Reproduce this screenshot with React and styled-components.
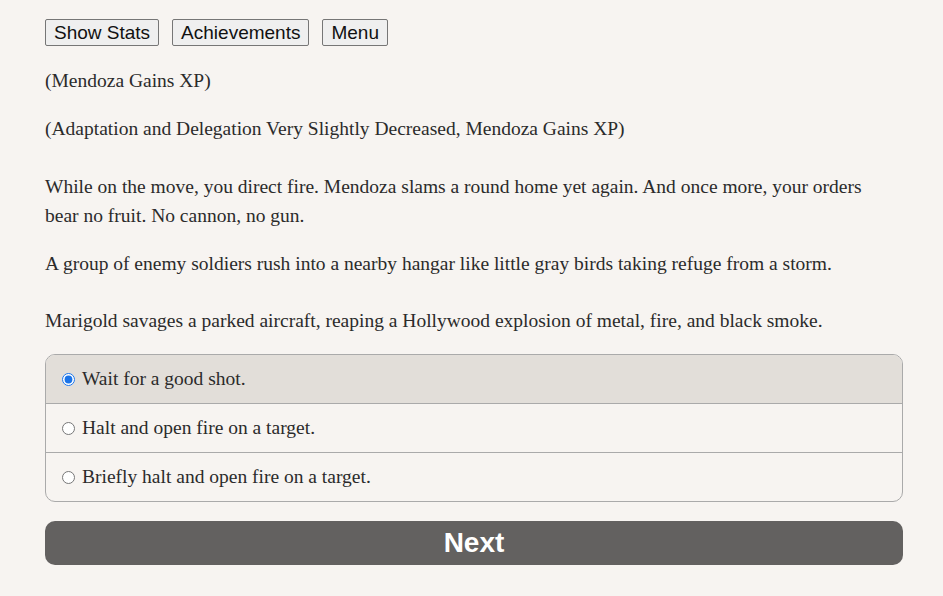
import React from 'react';
import styled, { createGlobalStyle } from 'styled-components';

const GlobalStyle = createGlobalStyle`
  html, body {
    margin: 0;
    padding: 0;
    background-color: #f7f4f1;
  }
`;

const Page = styled.div`
  width: 858px;
  padding: 19px 0 0 45px;
  font-family: "Liberation Serif", serif;
  font-size: 19.5px;
  color: #2b2b2b;
`;

const Toolbar = styled.div`
  display: flex;
  gap: 13px;
`;

const ToolButton = styled.button`
  font-family: "Liberation Sans", Arial, sans-serif;
  font-size: 19px;
  height: 27px;
  padding: 0 8px;
  color: #111;
  background: #efefef;
  border: 1px solid #767676;
  border-radius: 2px;
`;

const Para = styled.p`
  margin: ${p => p.$top || 0}px 0 0 0;
  padding-right: 30px;
  line-height: 29px;
`;

const Choices = styled.div`
  margin-top: 19px;
  border: 1px solid #aaa;
  border-radius: 10px;
  overflow: hidden;
`;

const Choice = styled.label`
  display: flex;
  align-items: center;
  height: 48px;
  padding-left: 16px;
  background: ${p => (p.$selected ? '#e2ded9' : 'transparent')};
  border-top: ${p => (p.$first ? 'none' : '1px solid #aaa')};
  gap: 7px;
`;

const Radio = styled.input`
  margin: 0;
  width: 13px;
  height: 13px;
  accent-color: #1a73e8;
`;

const NextButton = styled.button`
  display: block;
  width: 100%;
  height: 44px;
  margin-top: 19px;
  background: #636160;
  color: #fff;
  border: none;
  border-radius: 10px;
  font-family: "Liberation Sans", Arial, sans-serif;
  font-weight: bold;
  font-size: 28px;
`;

const options = [
  'Wait for a good shot.',
  'Halt and open fire on a target.',
  'Briefly halt and open fire on a target.',
];

export default function App() {
  return (
    <Page>
      <GlobalStyle />
      <Toolbar>
        <ToolButton>Show Stats</ToolButton>
        <ToolButton>Achievements</ToolButton>
        <ToolButton>Menu</ToolButton>
      </Toolbar>
      <Para $top={20}>(Mendoza Gains XP)</Para>
      <Para $top={19}>(Adaptation and Delegation Very Slightly Decreased, Mendoza Gains XP)</Para>
      <Para $top={29}>
        While on the move, you direct fire. Mendoza slams a round home yet again. And once more, your orders bear no fruit. No cannon, no gun.
      </Para>
      <Para $top={19}>A group of enemy soldiers rush into a nearby hangar like little gray birds taking refuge from a storm.</Para>
      <Para $top={28}>Marigold savages a parked aircraft, reaping a Hollywood explosion of metal, fire, and black smoke.</Para>
      <Choices>
        {options.map((o, i) => (
          <Choice key={o} $selected={i === 0} $first={i === 0}>
            <Radio type="radio" name="choice" defaultChecked={i === 0} />
            {o}
          </Choice>
        ))}
      </Choices>
      <NextButton>Next</NextButton>
    </Page>
  );
}
